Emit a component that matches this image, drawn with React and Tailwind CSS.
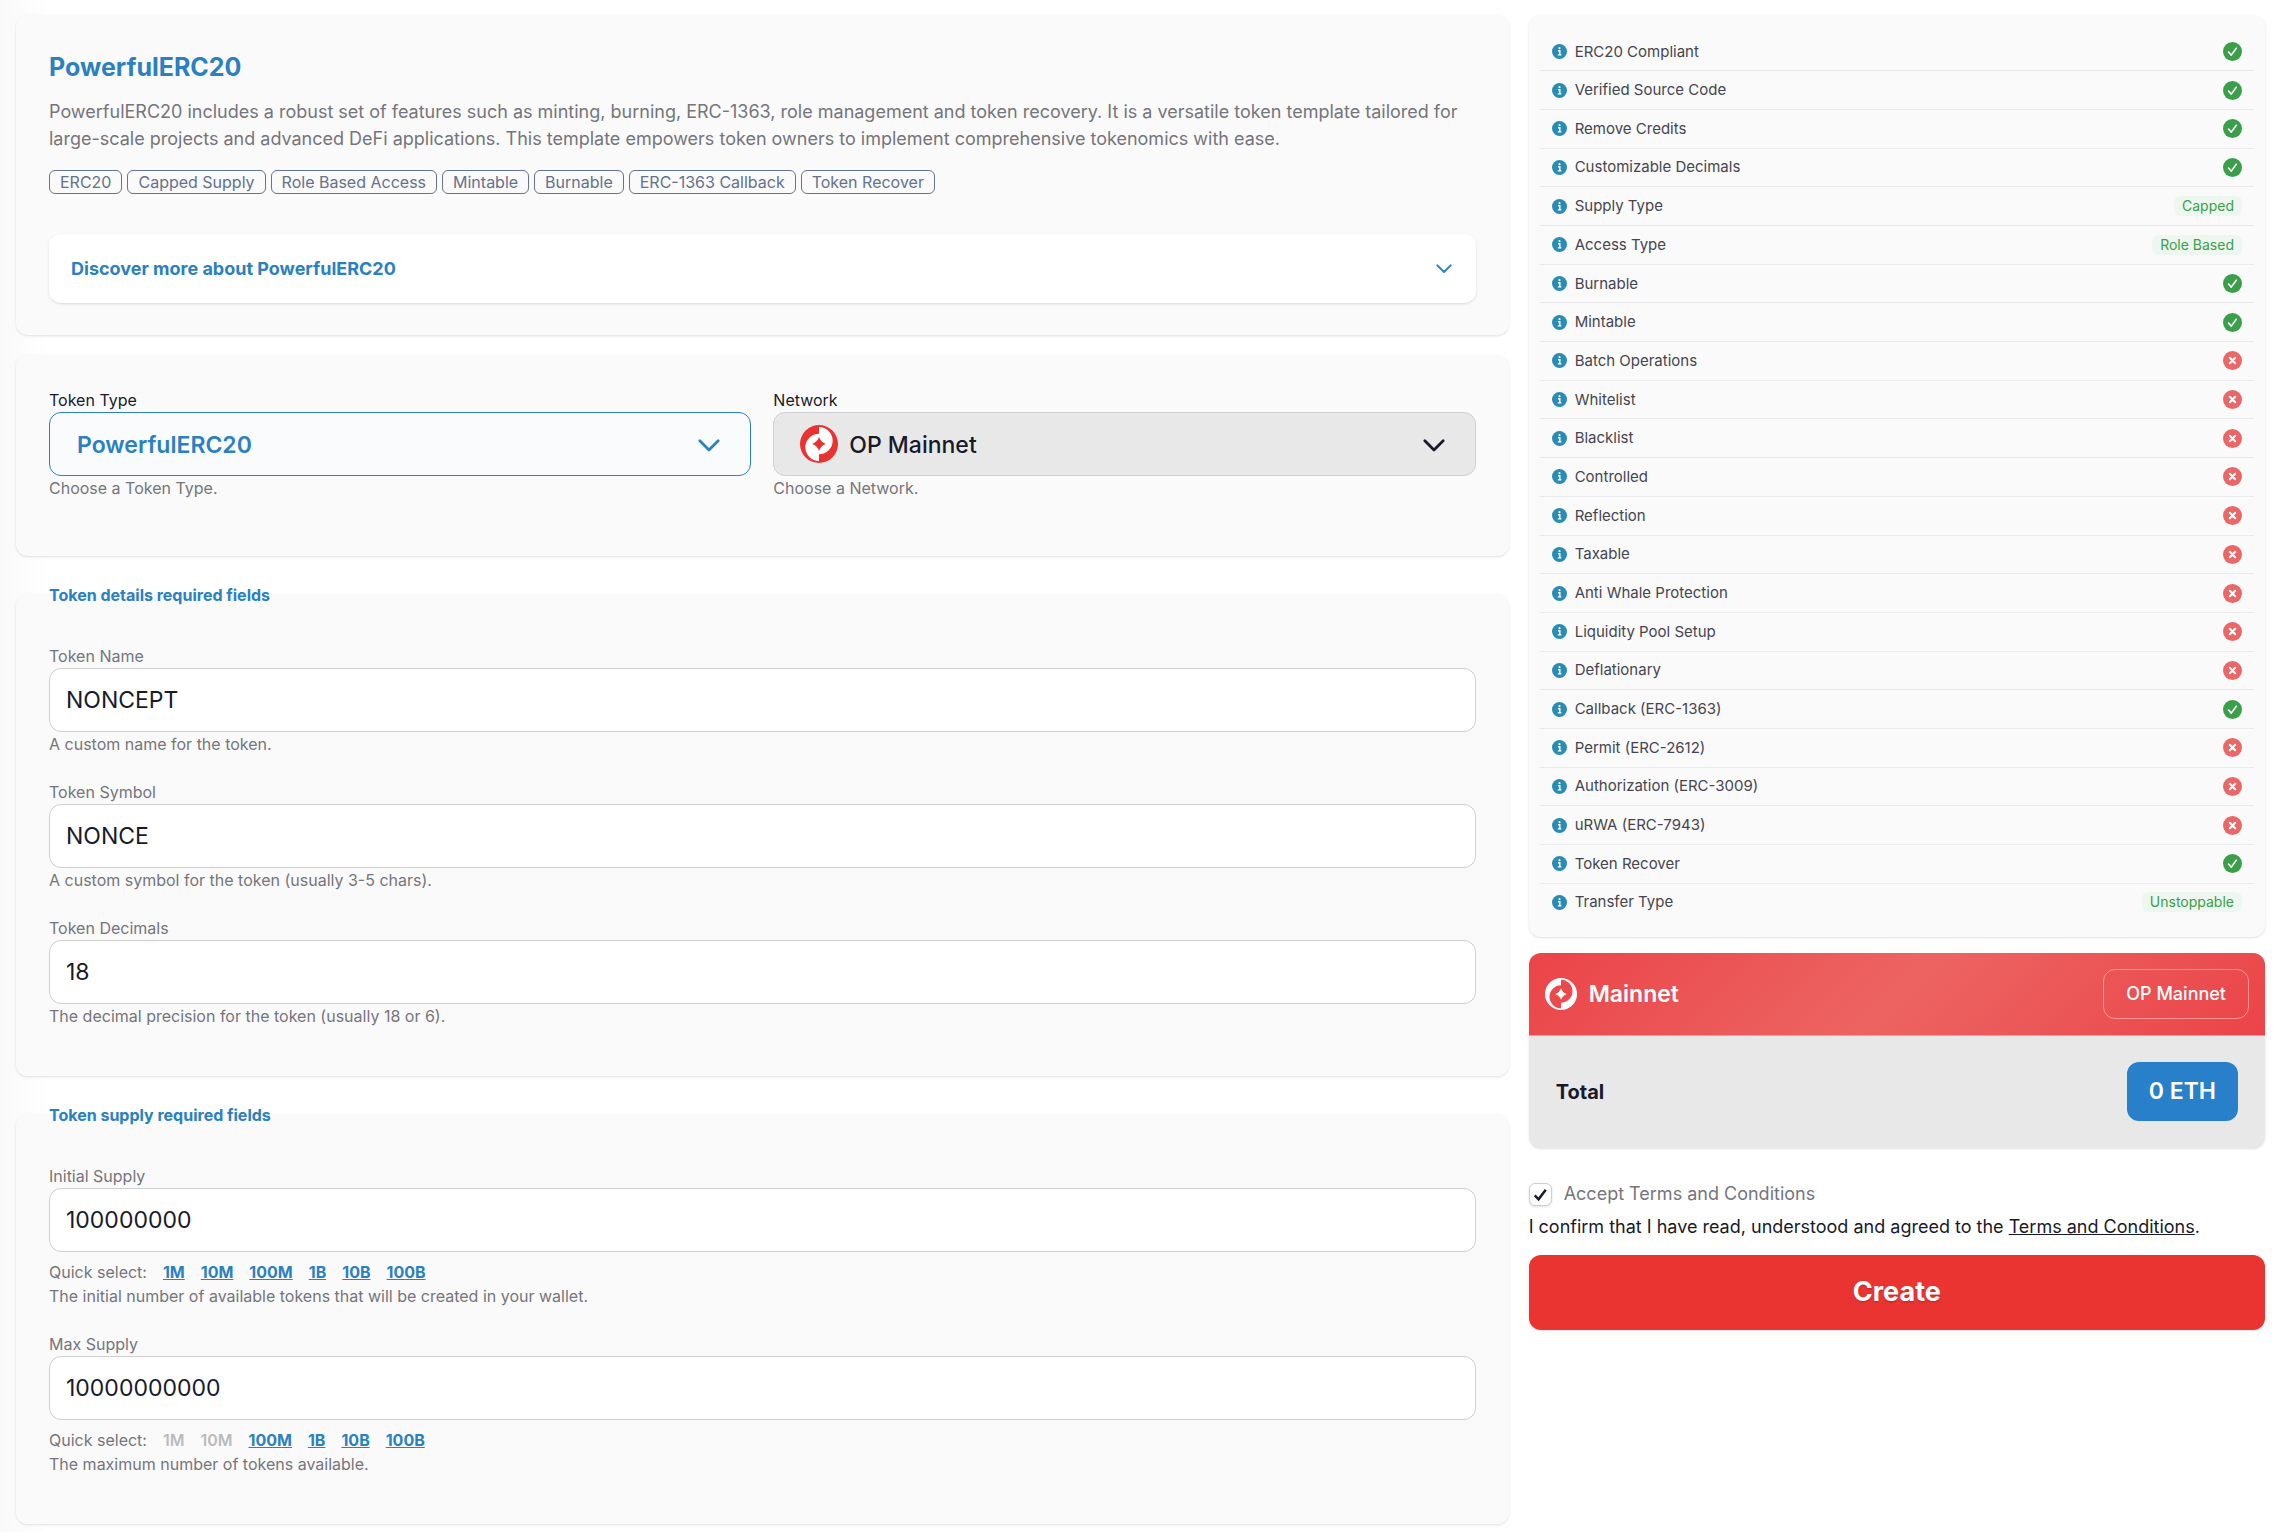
import { useState } from 'react'

const tags = [
  'ERC20',
  'Capped Supply',
  'Role Based Access',
  'Mintable',
  'Burnable',
  'ERC-1363 Callback',
  'Token Recover',
]

const features = [
  { name: 'ERC20 Compliant', value: true },
  { name: 'Verified Source Code', value: true },
  { name: 'Remove Credits', value: true },
  { name: 'Customizable Decimals', value: true },
  { name: 'Supply Type', value: 'Capped' },
  { name: 'Access Type', value: 'Role Based' },
  { name: 'Burnable', value: true },
  { name: 'Mintable', value: true },
  { name: 'Batch Operations', value: false },
  { name: 'Whitelist', value: false },
  { name: 'Blacklist', value: false },
  { name: 'Controlled', value: false },
  { name: 'Reflection', value: false },
  { name: 'Taxable', value: false },
  { name: 'Anti Whale Protection', value: false },
  { name: 'Liquidity Pool Setup', value: false },
  { name: 'Deflationary', value: false },
  { name: 'Callback (ERC-1363)', value: true },
  { name: 'Permit (ERC-2612)', value: false },
  { name: 'Authorization (ERC-3009)', value: false },
  { name: 'uRWA (ERC-7943)', value: false },
  { name: 'Token Recover', value: true },
  { name: 'Transfer Type', value: 'Unstoppable' },
]

const amounts = [
  { label: '1M', value: '1000000' },
  { label: '10M', value: '10000000' },
  { label: '100M', value: '100000000' },
  { label: '1B', value: '1000000000' },
  { label: '10B', value: '10000000000' },
  { label: '100B', value: '100000000000' },
]

function NetworkLogo({ className }) {
  return (
    <svg viewBox="0 0 110 110" className={className} aria-hidden="true">
      <path
        fill="currentColor"
        fillRule="evenodd"
        d="M55 0A55 55 0 1 1 55 110A55 55 0 1 1 55 0ZM55 6V25A39.5 39.5 0 0 0 55 104V85A39.5 39.5 0 0 0 55 6Z"
      />
      <path fill="currentColor" d="M55 35Q60 50 75 55Q60 60 55 75Q50 60 35 55Q50 50 55 35Z" />
    </svg>
  )
}

function ChevronIcon({ className }) {
  return (
    <svg
      viewBox="0 0 24 14"
      className={className}
      fill="none"
      stroke="currentColor"
      strokeWidth="3"
      strokeLinecap="round"
      strokeLinejoin="round"
      aria-hidden="true"
    >
      <path d="M2 2l10 10L22 2" />
    </svg>
  )
}

function InfoIcon() {
  return (
    <svg viewBox="0 0 16 16" className="size-[15px] shrink-0" aria-hidden="true">
      <circle cx="8" cy="8" r="8" fill="#2a8bb3" />
      <circle cx="8" cy="4.4" r="1.1" fill="#fff" />
      <path d="M6.4 7.2H8.4V11.6M6.2 11.6H10" fill="none" stroke="#fff" strokeWidth="1.4" />
    </svg>
  )
}

function CheckIcon() {
  return (
    <svg viewBox="0 0 20 20" className="size-[19px]" role="img" aria-label="Yes">
      <circle cx="10" cy="10" r="10" fill="#3a9f48" />
      <path
        d="M5.8 10.6l2.9 3.2 5.3-7.2"
        fill="none"
        stroke="#fff"
        strokeWidth="1.7"
        strokeLinecap="round"
        strokeLinejoin="round"
      />
    </svg>
  )
}

function CrossIcon() {
  return (
    <svg viewBox="0 0 20 20" className="size-[19px]" role="img" aria-label="No">
      <circle cx="10" cy="10" r="10" fill="#e96767" />
      <path d="M7.2 7.2l5.6 5.6M12.8 7.2l-5.6 5.6" stroke="#fff" strokeWidth="2.2" strokeLinecap="round" />
    </svg>
  )
}

function Card({ className = '', children }) {
  return <section className={`rounded-xl bg-[#fafafa] px-[33px] shadow-sm ${className}`}>{children}</section>
}

function FieldGroup({ title, children }) {
  return (
    <fieldset className="mt-[26px] rounded-xl bg-[#fafafa] px-[33px] pb-6 shadow-sm">
      <legend className="-mt-px -mb-3 h-6 text-base leading-[26px] font-bold text-[#2a80c0]">{title}</legend>
      <div className="pt-[50px]">{children}</div>
    </fieldset>
  )
}

function TextField({ id, label, help, value, onChange, children }) {
  return (
    <div className="mb-6">
      <label htmlFor={id} className="block text-base leading-6 text-[#75757c]">
        {label}
      </label>
      <input
        id={id}
        type="text"
        value={value}
        onChange={(e) => onChange(e.target.value)}
        className="block h-16 w-full rounded-xl border border-[#cfcfd2] bg-white px-4 text-[23px] text-[#181a2a] outline-none"
      />
      {children}
      <p className="text-base leading-6 text-[#75757c]">{help}</p>
    </div>
  )
}

function QuickSelect({ onPick, min = 0 }) {
  return (
    <div className="mt-2 flex h-6 items-center gap-4 text-base text-[#75757c]">
      <span>Quick select:</span>
      {amounts.map((a) => (
        <button
          key={a.label}
          type="button"
          disabled={Number(a.value) < min}
          onClick={() => onPick(a.value)}
          className="font-bold text-[#2a80c0] underline disabled:font-semibold disabled:text-[#bababc] disabled:no-underline"
        >
          {a.label}
        </button>
      ))}
    </div>
  )
}

function FeatureTable() {
  return (
    <div className="rounded-xl bg-[#fafafa] px-[11px] pt-[18px] pb-4 shadow-sm">
      <table className="h-[888px] w-full">
        <tbody>
          {features.map((f) => (
            <tr key={f.name} className="border-b border-[#ebebed] last:border-0">
              <th scope="row" className="py-0 pl-3 text-left font-normal">
                <span className="flex items-center gap-2 text-[15px] leading-5 text-[#45454f]">
                  <InfoIcon />
                  {f.name}
                </span>
              </th>
              <td className="py-0 pr-3">
                <span className="flex justify-end">
                  {f.value === true && <CheckIcon />}
                  {f.value === false && <CrossIcon />}
                  {typeof f.value === 'string' && (
                    <span className="rounded-md bg-[#eef7ef] px-2 text-sm leading-5 text-[#3a9f48]">{f.value}</span>
                  )}
                </span>
              </td>
            </tr>
          ))}
        </tbody>
      </table>
    </div>
  )
}

function Summary() {
  return (
    <div className="mt-4 overflow-hidden rounded-xl bg-[#e8e8e8] shadow-sm">
      <div className="flex items-center justify-between border-b border-[#f09a9a] bg-linear-[135deg,#eb4448,#ec6462_50%,#eb4448] p-4 text-white">
        <div className="flex items-center gap-3 text-[23px] leading-8 font-semibold">
          <NetworkLogo className="size-8" />
          Mainnet
        </div>
        <span className="rounded-xl border border-white/40 px-[22px] py-[11px] text-lg leading-[26px] font-medium">
          OP Mainnet
        </span>
      </div>
      <div className="flex items-center justify-between px-[27px] pt-[26px] pb-[27px]">
        <span className="text-xl font-bold text-[#181a2a]">Total</span>
        <span className="rounded-xl bg-[#2780c9] px-[22px] text-[23px] leading-[59px] font-semibold text-white">
          0 ETH
        </span>
      </div>
    </div>
  )
}

export default function App() {
  const [name, setName] = useState('NONCEPT')
  const [symbol, setSymbol] = useState('NONCE')
  const [decimals, setDecimals] = useState('18')
  const [initial, setInitial] = useState('100000000')
  const [max, setMax] = useState('10000000000')
  const [accepted, setAccepted] = useState(true)

  return (
    <main className="grid min-h-screen grid-cols-12 items-start gap-5 bg-white bg-linear-[90deg,#f9f9f9,#ffffff_50px] pt-[15px] pr-[17px] pb-2 pl-4 font-[Inter,sans-serif] text-[#181a2a]">
      <form className="col-span-8" onSubmit={(e) => e.preventDefault()}>
        <Card className="pt-8 pb-8">
          <h1 className="text-[25px] leading-10 font-bold text-[#2a80c0]">PowerfulERC20</h1>
          <p className="mt-[11px] text-lg leading-[27px] text-[#75757c]">
            PowerfulERC20 includes a robust set of features such as minting, burning, ERC-1363, role management and
            token recovery. It is a versatile token template tailored for large-scale projects and advanced DeFi
            applications. This template empowers token owners to implement comprehensive tokenomics with ease.
          </p>
          <ul className="mt-[18px] flex flex-wrap gap-[5px]">
            {tags.map((t) => (
              <li
                key={t}
                className="rounded-md border border-[#64728c] px-2.5 text-base leading-[22px] text-[#64728c]"
              >
                {t}
              </li>
            ))}
          </ul>
          <button
            type="button"
            className="mt-10 flex h-[69px] w-full items-center justify-between rounded-xl bg-white pr-6 pl-[22px] text-lg font-bold text-[#2a80c0] shadow-sm"
          >
            Discover more about PowerfulERC20
            <ChevronIcon className="w-4" />
          </button>
        </Card>

        <Card className="mt-5 grid grid-cols-2 gap-[22px] pt-[33px] pb-[56px]">
          <div>
            <label htmlFor="token-type" className="block text-base leading-6">
              Token Type
            </label>
            <div className="relative text-[#2a80c0]">
              <select
                id="token-type"
                className="block h-16 w-full appearance-none rounded-xl border border-[#2a80c0] bg-[#fafbfc] px-[27px] pt-0.5 text-[23px] font-semibold"
              >
                <option>PowerfulERC20</option>
              </select>
              <ChevronIcon className="pointer-events-none absolute top-[27px] right-[31px] w-[22px]" />
            </div>
            <p className="text-base leading-6 text-[#75757c]">Choose a Token Type.</p>
          </div>
          <div>
            <label htmlFor="network" className="block text-base leading-6">
              Network
            </label>
            <div className="relative">
              <select
                id="network"
                className="block h-16 w-full appearance-none rounded-xl border border-[#cfcfd2] bg-[#e8e8e8] pt-0.5 pr-7 pl-[75px] text-[23px] font-medium"
              >
                <option>OP Mainnet</option>
              </select>
              <span className="pointer-events-none absolute top-[13px] left-[27px] rounded-full bg-white text-[#e83331]">
                <NetworkLogo className="size-[38px]" />
              </span>
              <ChevronIcon className="pointer-events-none absolute top-[27px] right-[31px] w-[22px]" />
            </div>
            <p className="text-base leading-6 text-[#75757c]">Choose a Network.</p>
          </div>
        </Card>

        <FieldGroup title="Token details required fields">
          <TextField
            id="token-name"
            label="Token Name"
            help="A custom name for the token."
            value={name}
            onChange={setName}
          />
          <TextField
            id="token-symbol"
            label="Token Symbol"
            help="A custom symbol for the token (usually 3-5 chars)."
            value={symbol}
            onChange={setSymbol}
          />
          <TextField
            id="token-decimals"
            label="Token Decimals"
            help="The decimal precision for the token (usually 18 or 6)."
            value={decimals}
            onChange={setDecimals}
          />
        </FieldGroup>

        <FieldGroup title="Token supply required fields">
          <TextField
            id="initial-supply"
            label="Initial Supply"
            help="The initial number of available tokens that will be created in your wallet."
            value={initial}
            onChange={setInitial}
          >
            <QuickSelect onPick={setInitial} />
          </TextField>
          <TextField
            id="max-supply"
            label="Max Supply"
            help="The maximum number of tokens available."
            value={max}
            onChange={setMax}
          >
            <QuickSelect onPick={setMax} min={Number(initial)} />
          </TextField>
        </FieldGroup>
      </form>

      <aside className="col-span-4">
        <FeatureTable />
        <Summary />
        <label className="mt-8 flex items-center gap-3 text-lg leading-7 text-[#75757c]">
          <span className="relative flex">
            <input
              type="checkbox"
              checked={accepted}
              onChange={(e) => setAccepted(e.target.checked)}
              className="size-[23px] appearance-none rounded-md border border-[#cfcfd2] bg-white shadow-sm"
            />
            {accepted && (
              <svg viewBox="0 0 24 24" className="pointer-events-none absolute inset-0" aria-hidden="true">
                <path d="M6 13l4 4 7.5-10" fill="none" stroke="#181a2a" strokeWidth="2.6" />
              </svg>
            )}
          </span>
          Accept Terms and Conditions
        </label>
        <p className="mt-[5px] text-lg leading-7">
          I confirm that I have read, understood and agreed to the{' '}
          <a href="#terms" className="underline">
            Terms and Conditions
          </a>
          .
        </p>
        <button
          type="button"
          className="mt-[14px] h-[75px] w-full rounded-xl bg-[#ea3431] text-[27px] font-bold text-white shadow-sm text-shadow-sm"
        >
          Create
        </button>
      </aside>
    </main>
  )
}
